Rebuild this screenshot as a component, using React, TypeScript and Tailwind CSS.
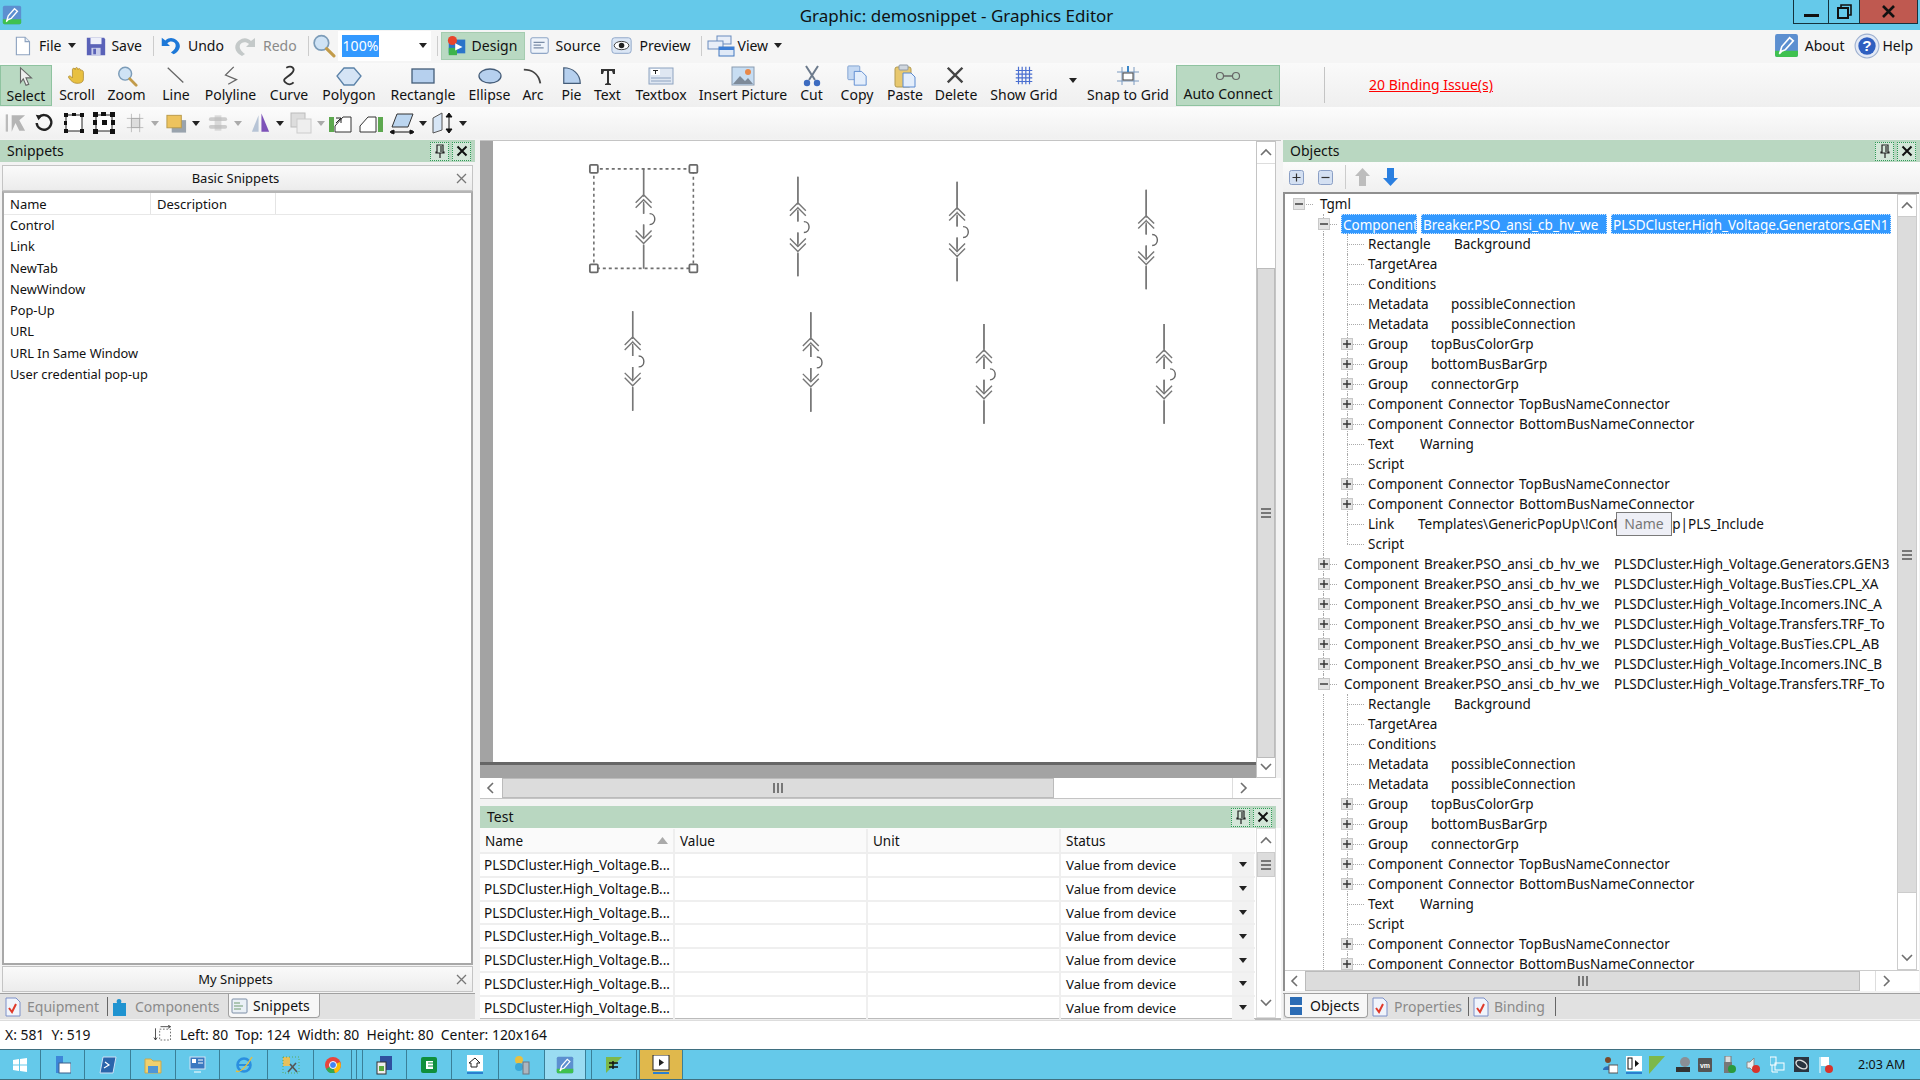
import type { ReactNode } from 'react'

const S = ({ w = 24, h = 24, vb = '0 0 24 24', children }: { w?: number; h?: number; vb?: string; children: ReactNode }) => (
  <svg width={w} height={h} viewBox={vb} className="shrink-0" fill="none">
    {children}
  </svg>
)

const Caret = ({ light }: { light?: boolean }) => (
  <svg width="8" height="5" viewBox="0 0 8 5" className="shrink-0">
    <path d="M0 0h8L4 5z" fill={light ? '#aaa' : '#222'} />
  </svg>
)

const Logo = ({ s = 20 }: { s?: number }) => (
  <S w={s} h={s}>
    <rect x="1" y="1" width="22" height="22" rx="2" fill="#5c8fd0" />
    <path d="M1 17h22v4a2 2 0 0 1-2 2H3a2 2 0 0 1-2-2z" fill="#3fc14f" />
    <path d="M6 18l1.5-5L15 4.5l3.5 3L11 16z" stroke="#fff" strokeWidth="1.6" />
    <path d="M5 20l2-2" stroke="#fff" strokeWidth="1.6" />
  </S>
)

const DocIco = () => (
  <S w={21} h={22}>
    <path d="M5 2h10l5 5v15H5z" fill="#fff" stroke="#8ea3c0" strokeWidth="1.3" />
    <path d="M15 2v5h5" stroke="#8ea3c0" strokeWidth="1.3" fill="#e5ecf5" />
  </S>
)
const SaveIco = () => (
  <S w={24} h={22}>
    <path d="M2 3h19l1 2v17H2z" fill="#5a62b8" />
    <rect x="6" y="3" width="12" height="7" fill="#eef0fa" />
    <rect x="7" y="14" width="10" height="8" fill="#c8cdea" />
    <rect x="9" y="15" width="3" height="6" fill="#5a62b8" />
  </S>
)
const UndoIco = ({ color = '#1d78d8' }: { color?: string }) => (
  <S w={24} h={22}>
    <path d="M3 3v9h9l-3-3c3-3 8-2 9 1s-1 6-5 9l3 2c6-3 8-8 6-12S13 0 7 6z" fill={color} />
  </S>
)
const RedoIco = () => (
  <svg width="24" height="22" viewBox="0 0 24 22" className="shrink-0 -scale-x-100">
    <path d="M3 3v9h9l-3-3c3-3 8-2 9 1s-1 6-5 9l3 2c6-3 8-8 6-12S13 0 7 6z" fill="#c4c9c9" />
  </svg>
)
const Glass = ({ s = 24 }: { s?: number }) => (
  <S w={s} h={s}>
    <circle cx="10" cy="9.5" r="7" fill="#cfe3f5" stroke="#7c9cb8" strokeWidth="1.6" />
    <path d="M15 15l7 7" stroke="#c29b4a" strokeWidth="3" strokeLinecap="round" />
  </S>
)
const DesignIco = () => (
  <S w={22} h={22}>
    <rect x="3" y="5" width="18" height="15" fill="#2b74c9" />
    <circle cx="7" cy="6" r="5" fill="#e8452c" />
    <rect x="3" y="14" width="9" height="8" fill="#3eb34a" />
    <path d="M10 9l8 4-8 4z" fill="#fff" />
  </S>
)
const SourceIco = () => (
  <S w={22} h={22}>
    <rect x="2" y="3" width="19" height="17" rx="2" fill="#eef3fa" stroke="#90a6c6" strokeWidth="1.2" />
    <path d="M5 8h12M5 11h8M5 14h11" stroke="#7a8ca6" strokeWidth="1.2" />
  </S>
)
const EyeIco = () => (
  <S w={22} h={22}>
    <rect x="1" y="3" width="21" height="17" rx="3" fill="#dbe6f5" stroke="#8ba3c6" />
    <ellipse cx="11.5" cy="11.5" rx="8" ry="4.5" fill="#fff" stroke="#333" />
    <circle cx="11.5" cy="11.5" r="3" fill="#222" />
  </S>
)
const ViewIco = () => (
  <S w={29} h={22} vb="0 0 29 22">
    <rect x="10" y="1" width="14" height="8" fill="#e8eef8" stroke="#6a8bbd" />
    <rect x="1" y="6" width="15" height="8" fill="#e8eef8" stroke="#6a8bbd" />
    <rect x="12" y="12" width="15" height="9" fill="#dfe9f7" stroke="#4378c0" />
    <rect x="12" y="12" width="15" height="3" fill="#3d7fd6" />
  </S>
)
const HelpIco = () => (
  <S w={26} h={26}>
    <circle cx="12" cy="12" r="11" fill="#e3e9f5" stroke="#9db0d0" />
    <circle cx="12" cy="12" r="8" fill="#2f5fc0" />
    <text x="12" y="17" textAnchor="middle" fontSize="14" fontWeight="700" fill="#fff" fontFamily="Liberation Sans, sans-serif">?</text>
  </S>
)

const tools: { label: string; w: string; active?: boolean; icon: ReactNode }[] = [
  { label: 'Select', w: 'w-[52px]', active: true, icon: <S w={22} h={22}><path d="M6 2l12 11h-6l3 7-3 1-3-7-3 4z" fill="#eee" stroke="#666" strokeWidth="1.2" /></S> },
  { label: 'Scroll', w: 'w-[50px]', icon: <S w={24} h={22}><path d="M3 14c-1-2 1-3 3-1l1 1V5c0-2 3-2 3 0 0-3 3-3 3 0 1-2 3-1 3 1 1-1 3 0 3 2v7c0 4-3 5-7 5s-7-3-9-6z" fill="#e8c040" stroke="#a8842c" strokeWidth=".8" /></S> },
  { label: 'Zoom', w: 'w-[49px]', icon: <Glass s={22} /> },
  { label: 'Line', w: 'w-[50px]', icon: <S w={22} h={22}><path d="M3 3l17 16" stroke="#666" strokeWidth="1.4" /></S> },
  { label: 'Polyline', w: 'w-[59px]', icon: <S w={22} h={22}><path d="M15 2L6 11l12 5-9 5" stroke="#666" strokeWidth="1.4" /></S> },
  { label: 'Curve', w: 'w-[58px]', icon: <S w={22} h={22}><path d="M9 3c6-3 11 1 6 6s-11 6-7 10 8 1 9 0" stroke="#333" strokeWidth="2" /></S> },
  { label: 'Polygon', w: 'w-[62px]', icon: <S w={26} h={22} vb="0 0 26 22"><path d="M8 3h10l7 8-7 9H8l-7-9z" fill="#d5e4f5" stroke="#5b82a8" strokeWidth="1.3" /></S> },
  { label: 'Rectangle', w: 'w-[86px]', icon: <S w={24} h={20} vb="0 0 24 20"><rect x="1" y="3" width="22" height="14" fill="#b6d0ee" stroke="#445c78" strokeWidth="1.3" /></S> },
  { label: 'Ellipse', w: 'w-[47px]', icon: <S w={24} h={20} vb="0 0 24 20"><ellipse cx="12" cy="10" rx="11" ry="7" fill="#b6d0ee" stroke="#445c78" strokeWidth="1.3" /></S> },
  { label: 'Arc', w: 'w-[40px]', icon: <S w={22} h={22}><path d="M2 5c8 0 16 4 18 15" stroke="#444" strokeWidth="2" /></S> },
  { label: 'Pie', w: 'w-[37px]', icon: <S w={22} h={22}><path d="M3 3v17h18C21 10 13 3 3 3z" fill="#b6d0ee" stroke="#445c78" strokeWidth="1.3" /></S> },
  { label: 'Text', w: 'w-[35px]', icon: <S w={20} h={22} vb="0 0 20 22"><path d="M3 4h14v5h-2l-1-3h-3v12l2 1v1H7v-1l2-1V6H6L5 9H3z" fill="#333" /></S> },
  { label: 'Textbox', w: 'w-[72px]', icon: <S w={26} h={20} vb="0 0 26 20"><rect x="1" y="2" width="24" height="16" fill="#dfe7f2" stroke="#8ea3c0" /><rect x="3" y="3" width="9" height="6" fill="#fff" /><path d="M5 4h5v1H8v3H7V5H5z" fill="#222" /><path d="M3 12h20M3 15h20" stroke="#8ea3c0" /></S> },
  { label: 'Insert Picture', w: 'w-[92px]', icon: <S w={24} h={20} vb="0 0 24 20"><rect x="1" y="1" width="22" height="18" fill="#c7ddf2" stroke="#8a9bb0" /><path d="M2 18l7-8 5 5 3-3 5 6z" fill="#7d8a99" /><circle cx="17" cy="6" r="3" fill="#e8894a" /></S> },
  { label: 'Cut', w: 'w-[45px]', icon: <S w={20} h={22} vb="0 0 20 22"><path d="M4 1l9 14M16 1L7 15" stroke="#6c7a8c" strokeWidth="2" /><circle cx="5" cy="18" r="3.2" fill="#3d6cc0" /><circle cx="15" cy="18" r="3.2" fill="#3d6cc0" /></S> },
  { label: 'Copy', w: 'w-[46px]', icon: <S w={24} h={22}><rect x="2" y="1" width="13" height="15" rx="1" fill="#c5d9f3" stroke="#7d9fd0" /><path d="M9 7h8l5 5v10H9z" fill="#e4eefb" stroke="#5b8ad0" /></S> },
  { label: 'Paste', w: 'w-[50px]', icon: <S w={24} h={24}><rect x="2" y="3" width="16" height="20" rx="2" fill="#e8c86e" stroke="#b29a50" /><rect x="6" y="1" width="9" height="5" rx="1" fill="#cfd6de" stroke="#9099a5" /><path d="M10 9h8l4 4v10H10z" fill="#e4eefb" stroke="#5b8ad0" /></S> },
  { label: 'Delete', w: 'w-[52px]', icon: <S w={22} h={22}><path d="M3 3l16 16M19 3L3 19" stroke="#444" strokeWidth="2.6" /></S> },
  { label: 'Show Grid', w: 'w-[84px]', icon: <S w={24} h={22}><path d="M3 6h18M3 10h18M3 14h18M3 18h18M6 2v19M10 2v19M14 2v19M18 2v19" stroke="#4a6fd0" strokeWidth="1.3" /></S> },
]

const tools2: { label: string; w: string; active?: boolean; icon: ReactNode }[] = [
  { label: 'Snap to Grid', w: 'w-[96px]', icon: <S w={26} h={22} vb="0 0 26 22"><path d="M2 7h22M2 16h22M7 2v18M19 2v18" stroke="#7a9ac0" strokeWidth="1" /><rect x="8" y="8" width="10" height="7" fill="#fff" stroke="#444" /><path d="M13 1v6" stroke="#3a86c8" strokeWidth="2" /></S> },
  { label: 'Auto Connect', w: 'w-[104px]', active: true, icon: <S w={26} h={14} vb="0 0 26 14"><circle cx="5" cy="7" r="3.5" stroke="#666" strokeWidth="1.2" /><circle cx="21" cy="7" r="3.5" stroke="#666" strokeWidth="1.2" /><path d="M8 7h10" stroke="#666" strokeWidth="1.5" /></S> },
]

const ToolBtn = ({ label, w, active, icon }: { label: string; w: string; active?: boolean; icon: ReactNode }) => (
  <div className={`${w} h-[41px] flex flex-col items-center justify-between shrink-0 pt-[1px] pb-[3px] ${active ? 'bg-[#b9d9c2] border border-[#8fc3a0]' : ''}`}>
    <div className="h-[21px] flex items-center justify-center">{icon}</div>
    <span className="leading-[16px] whitespace-nowrap">{label}</span>
  </div>
)

const sec: { ml: string; caret?: boolean; light?: boolean; icon: ReactNode }[] = [
  { ml: 'ml-[4px]', icon: <S w={23} h={24}><path d="M8 4h14l-6 5 6 11h-6l-4-8-4 9z" fill="#b5b5b5" /><path d="M3 3v18" stroke="#bbb" strokeWidth="2.4" /></S> },
  { ml: 'ml-[6px]', icon: <S w={22} h={24}><path d="M6 6a8 8 0 1 1-2 6" stroke="#222" strokeWidth="2.6" /><path d="M3 3l7 1-4 5z" fill="#222" /></S> },
  { ml: 'ml-[7px]', icon: <S w={24} h={24}><rect x="4" y="4" width="16" height="16" stroke="#222" strokeWidth="1" fill="#fff" /><path d="M2 2h4v4H2zM18 2h4v4h-4zM2 18h4v4H2zM18 18h4v4h-4zM10 2h4v3h-4zM2 10h3v4H2z" fill="#111" /></S> },
  { ml: 'ml-[6px]', icon: <S w={24} h={24}><rect x="4" y="4" width="16" height="16" stroke="#222" fill="#fff" /><path d="M1 1h5v5H1zM18 1h5v5h-5zM1 18h5v5H1zM18 18h5v5h-5zM10 9h5v5h-5zM9 1h5v4H9zM1 9h4v5H1zM19 9h4v5h-4z" fill="#111" /></S> },
  { ml: 'ml-[9px]', caret: true, light: true, icon: <S w={22} h={24}><path d="M2 7h18M2 17h18M7 2v20M16 2v20" stroke="#bbb" /><rect x="7" y="7" width="9" height="10" fill="#ddd" stroke="#aaa" /></S> },
  { ml: 'ml-[6px]', caret: true, icon: <S w={23} h={24}><rect x="7" y="9" width="15" height="13" fill="#99a3ad" /><rect x="2" y="4" width="15" height="13" fill="#edc35e" stroke="#b99a4a" /></S> },
  { ml: 'ml-[7px]', caret: true, light: true, icon: <S w={23} h={24}><rect x="2" y="6" width="19" height="4" rx="2" fill="#ccc" /><rect x="2" y="14" width="19" height="4" rx="2" fill="#ccc" /><rect x="8" y="4" width="7" height="16" fill="#bbb" opacity=".5" /></S> },
  { ml: 'ml-[7px]', caret: true, icon: <S w={23} h={24}><path d="M10 4v17H3z" fill="#b7c4d6" /><path d="M13 2v19h8z" fill="#7d52b8" /></S> },
  { ml: 'ml-[5px]', caret: true, light: true, icon: <S w={24} h={24}><rect x="2" y="2" width="14" height="14" fill="#ddd" stroke="#bbb" /><rect x="8" y="8" width="14" height="14" fill="#eee" stroke="#ccc" /></S> },
  { ml: 'ml-[3px]', icon: <S w={27} h={24} vb="0 0 27 24"><rect x="1" y="6" width="5" height="15" fill="#5da84f" /><path d="M7 15l8-9h8v15H7z" fill="#fff" stroke="#333" /><path d="M8 12l5-5M8 7h5v5" stroke="#222" /></S> },
  { ml: 'ml-[4px]', icon: <S w={25} h={24} vb="0 0 25 24"><rect x="19" y="6" width="5" height="15" fill="#5da84f" /><path d="M17 15l-8-9H1v15h16z" fill="#fff" stroke="#333" transform="matrix(-1 0 0 1 18 0)" /></S> },
  { ml: 'ml-[5px]', caret: true, icon: <S w={26} h={24} vb="0 0 26 24"><path d="M8 3h16l-5 13H3z" fill="#bcd6f0" stroke="#333" /><path d="M3 21h20M3 19v4M23 19v4M1 21l4-2v4zM25 21l-4-2v4z" stroke="#111" fill="#111" /></S> },
  { ml: 'ml-[3px]', caret: true, icon: <S w={25} h={24} vb="0 0 25 24"><path d="M3 7l9-5v17l-9 3z" fill="#d7e6f6" stroke="#555" /><path d="M19 3v18M16 6l3-4 3 4zM16 18l3 4 3-4z" stroke="#111" fill="#111" /></S> },
]

const PanelHeader = ({ title, className = '' }: { title: string; className?: string }) => (
  <div className={`h-[22px] bg-[#b9d7c1] flex items-center justify-between pl-[7px] pr-[4px] shrink-0 ${className}`}>
    <span className="leading-none">{title}</span>
    <div className="flex gap-[3px]">
      <div className="w-[19px] h-[19px] bg-[#d3e6d8] border border-dotted border-[#2d9a55] flex items-center justify-center">
        <S w={12} h={14} vb="0 0 12 14"><path d="M3 1h6v7h1v1H2V8h1zM6 9v5M7 2v6" stroke="#222" strokeWidth="1.2" /></S>
      </div>
      <div className="w-[19px] h-[19px] bg-[#d3e6d8] border border-dotted border-[#2d9a55] flex items-center justify-center">
        <S w={12} h={12} vb="0 0 12 12"><path d="M1.5 1.5l9 9M10.5 1.5l-9 9" stroke="#111" strokeWidth="2" /></S>
      </div>
    </div>
  </div>
)

const Chev = ({ d }: { d: 'u' | 'd' | 'l' | 'r' }) => {
  const p = { u: 'M2 9l5-5 5 5', d: 'M2 5l5 5 5-5', l: 'M9 2L4 7l5 5', r: 'M5 2l5 5-5 5' }[d]
  return (
    <svg width="14" height="14" viewBox="0 0 14 14" fill="none">
      <path d={p} stroke="#6f6f6f" strokeWidth="1.6" />
    </svg>
  )
}
const Grip = ({ vertical }: { vertical?: boolean }) => (
  <div className={`flex ${vertical ? 'flex-col' : ''} gap-[2px]`}>
    <i className={`block bg-[#777] ${vertical ? 'w-[10px] h-[2px]' : 'w-[2px] h-[10px]'}`} />
    <i className={`block bg-[#777] ${vertical ? 'w-[10px] h-[2px]' : 'w-[2px] h-[10px]'}`} />
    <i className={`block bg-[#777] ${vertical ? 'w-[10px] h-[2px]' : 'w-[2px] h-[10px]'}`} />
  </div>
)
const SBtn = ({ d, className = '' }: { d: 'u' | 'd' | 'l' | 'r'; className?: string }) => (
  <div className={`flex items-center justify-center bg-white shrink-0 ${className}`}>
    <Chev d={d} />
  </div>
)

const Symbol = ({ x, y }: { x: number; y: number }) => (
  <g transform={`translate(${x} ${y})`} stroke="#777" strokeWidth="1.4" fill="none">
    <path d="M0 0v45M0 56v44" />
    <path d="M-8 35l8-8 8 8M-8 40l8-8 8 8" stroke="#fff" strokeWidth="3.4" />
    <path d="M-8 34l8-8 8 8M-8 39l8-8 8 8" />
    <path d="M-8 62l8 8 8-8M-8 67l8 8 8-8" stroke="#fff" strokeWidth="3.4" />
    <path d="M-8 62l8 8 8-8M-8 67l8 8 8-8" />
    <path d="M0 0v28M0 76v24M0 33v12M0 56v14" />
    <path d="M6 45c7 0 7 11 0 11" stroke="#666" />
  </g>
)

const Canvas = () => (
  <svg className="w-full h-full block" viewBox="0 0 762 624">
    <g>
      <Symbol x={149} y={28} />
      <Symbol x={304} y={36} />
      <Symbol x={464} y={41} />
      <Symbol x={654} y={49} />
      <Symbol x={138} y={171} />
      <Symbol x={317} y={172} />
      <Symbol x={491} y={184} />
      <Symbol x={672} y={184} />
    </g>
    <rect x="99" y="28" width="100" height="100" fill="none" stroke="#6f6f6f" strokeWidth="1.6" strokeDasharray="3 3" />
    <g fill="#fff" stroke="#6a6a6a" strokeWidth="1.8">
      <rect x="95" y="24" width="8" height="8" rx="1" />
      <rect x="195" y="24" width="8" height="8" rx="1" />
      <rect x="95" y="124" width="8" height="8" rx="1" />
      <rect x="195" y="124" width="8" height="8" rx="1" />
    </g>
  </svg>
)

const snippets = ['Control', 'Link', 'NewTab', 'NewWindow', 'Pop-Up', 'URL', 'URL In Same Window', 'User credential pop-up']

const Accordion = ({ title, className = '' }: { title: string; className?: string }) => (
  <div className={`h-[26px] flex items-center bg-gradient-to-b from-[#fafafa] to-[#ececec] border border-[#c4c4c4] relative shrink-0 ${className}`}>
    <span className="flex-1 text-center text-[13px] pr-[4px]">{title}</span>
    <span className="absolute right-[5px] top-[6px] w-[12px] h-[12px] flex items-center justify-center">
      <svg width="11" height="11" viewBox="0 0 11 11"><path d="M1 1l9 9M10 1l-9 9" stroke="#777" strokeWidth="1.3" /></svg>
    </span>
  </div>
)

const CheckDoc = () => (
  <S w={16} h={20} vb="0 0 16 20">
    <path d="M1 1h10l4 4v14H1z" fill="#f0f4fb" stroke="#7c90c8" />
    <path d="M4 11l3 4 4-8" stroke="#e03a2a" strokeWidth="2" />
  </S>
)
const PuzzleIco = () => (
  <S w={16} h={20} vb="0 0 16 20">
    <path d="M1 6h4c-1-2 0-4 2-4s3 2 2 4h5v13H1z" fill="#1f93d0" />
  </S>
)
const SnipIco = () => (
  <S w={18} h={18} vb="0 0 18 18">
    <rect x="1" y="2" width="15" height="14" rx="1" fill="#eaf0f6" stroke="#7d8ea6" />
    <path d="M3 6h6M3 9h9M3 12h7" stroke="#6f9a6f" />
  </S>
)
const ObjIco = () => (
  <S w={12} h={20} vb="0 0 12 20">
    <rect x="0" y="1" width="12" height="8" fill="#2b6cb5" />
    <rect x="0" y="11" width="12" height="8" fill="#2b6cb5" />
  </S>
)

type Row = { l: 0 | 1 | 2; e?: '+' | '-'; a: string; b?: string; c?: string; aw?: string; bw?: string; sel?: boolean; last?: boolean }
const comp = (c: string, extra: Partial<Row> = {}): Row => ({ l: 1, e: '+', a: 'Component', b: 'Breaker.PSO_ansi_cb_hv_we', c, aw: 'w-[80px]', bw: 'w-[190px]', ...extra })
const conn = (c: string): Row => ({ l: 2, e: '+', a: 'Component', b: 'Connector', c, aw: 'w-[80px]', bw: 'w-[71px]' })
const subtree = (): Row[] => [
  { l: 2, a: 'Rectangle', b: 'Background', aw: 'w-[86px]' },
  { l: 2, a: 'TargetArea' },
  { l: 2, a: 'Conditions' },
  { l: 2, a: 'Metadata', b: 'possibleConnection', aw: 'w-[83px]' },
  { l: 2, a: 'Metadata', b: 'possibleConnection', aw: 'w-[83px]' },
  { l: 2, e: '+', a: 'Group', b: 'topBusColorGrp', aw: 'w-[63px]' },
  { l: 2, e: '+', a: 'Group', b: 'bottomBusBarGrp', aw: 'w-[63px]' },
  { l: 2, e: '+', a: 'Group', b: 'connectorGrp', aw: 'w-[63px]' },
  conn('TopBusNameConnector'),
  conn('BottomBusNameConnector'),
  { l: 2, a: 'Text', b: 'Warning', aw: 'w-[52px]' },
  { l: 2, a: 'Script' },
  conn('TopBusNameConnector'),
  conn('BottomBusNameConnector'),
]
const rows: Row[] = [
  { l: 0, e: '-', a: 'Tgml' },
  comp('PLSDCluster.High_Voltage.Generators.GEN1', { e: '-', sel: true }),
  ...subtree(),
  { l: 2, a: 'Link', b: 'Templates\\GenericPopUp\\!ContextPopUp|PLS_Include', aw: 'w-[50px]' },
  { l: 2, a: 'Script', last: true },
  comp('PLSDCluster.High_Voltage.Generators.GEN3'),
  comp('PLSDCluster.High_Voltage.BusTies.CPL_XA'),
  comp('PLSDCluster.High_Voltage.Incomers.INC_A'),
  comp('PLSDCluster.High_Voltage.Transfers.TRF_To'),
  comp('PLSDCluster.High_Voltage.BusTies.CPL_AB'),
  comp('PLSDCluster.High_Voltage.Incomers.INC_B'),
  comp('PLSDCluster.High_Voltage.Transfers.TRF_To', { e: '-', last: true }),
  ...subtree(),
]

const Expander = ({ kind, className }: { kind: '+' | '-'; className: string }) => (
  <span className={`absolute top-[4px] w-[12px] h-[12px] bg-[#e4e4e4] border border-[#c8c8c8] flex items-center justify-center ${className}`}>
    <svg width="8" height="8" viewBox="0 0 8 8">
      <path d={kind === '+' ? 'M0 4h8M4 0v8' : 'M0 4h8'} stroke="#333" strokeWidth="1.4" />
    </svg>
  </span>
)

const TreeRow = ({ r }: { r: Row }) => {
  const gut = r.l === 0 ? 'w-[35px]' : r.l === 1 ? 'w-[59px]' : 'w-[83px]'
  return (
    <div className="flex h-[20px] items-center whitespace-nowrap">
      <div className={`relative h-full shrink-0 ${gut}`}>
        {r.l >= 1 && <i className={`absolute left-[38px] top-0 border-l border-dotted border-[#aaa] ${r.l === 1 && r.last ? 'h-[10px]' : 'h-full'}`} />}
        {r.l === 2 && <i className={`absolute left-[62px] top-0 border-l border-dotted border-[#aaa] ${r.last ? 'h-[10px]' : 'h-full'}`} />}
        <i className={`absolute top-[10px] border-t border-dotted border-[#aaa] ${r.l === 0 ? 'left-[14px] w-[14px]' : r.l === 1 ? 'left-[38px] w-[14px]' : 'left-[62px] w-[17px]'}`} />
        {r.e && <Expander kind={r.e} className={r.l === 0 ? 'left-[8px]' : r.l === 1 ? 'left-[33px]' : 'left-[56px]'} />}
      </div>
      {r.sel ? (
        <div className="flex gap-[4px] h-[20px] text-white -ml-[3px]">
          <span className="bg-[#3399ff] border border-dotted border-[#cfe6ff] px-[1px] w-[76px] overflow-hidden">{r.a}</span>
          <span className="bg-[#3399ff] border border-dotted border-[#cfe6ff] px-[1px] w-[186px] overflow-hidden">{r.b}</span>
          <span className="bg-[#3399ff] border border-dotted border-[#cfe6ff] px-[1px] w-[280px] overflow-hidden">{r.c}</span>
        </div>
      ) : (
        <div className="flex">
          <span className={r.b ? `${r.aw} shrink-0` : ''}>{r.a}</span>
          {r.b && <span className={r.c ? `${r.bw} shrink-0` : ''}>{r.b}</span>}
          {r.c && <span>{r.c}</span>}
        </div>
      )}
    </div>
  )
}

const taskCells: { w: string; hi?: 'a' | 'y'; gap?: boolean; icon?: ReactNode }[] = [
  { w: 'w-[41px]', icon: <svg width="14" height="14" viewBox="0 0 14 14"><path d="M0 2l6-1v5.5H0zM7 1l7-1v6.5H7zM0 7.5h6V13l-6-1zM7 7.5h7V14l-7-1z" fill="#fff" /></svg> },
  { w: 'w-[44px]', icon: <S w={16} h={18} vb="0 0 16 18"><rect x="1" y="0" width="7" height="17" fill="#3d86d8" /><rect x="4" y="7" width="12" height="10" fill="#fff" stroke="#3a5f8a" /></S> },
  { w: 'w-[46px]', icon: <S w={18} h={18} vb="0 0 18 18"><path d="M4 1h13l-3 16H1z" fill="#2a64ab" stroke="#cfe0f5" /><path d="M6 6l4 3-5 3" stroke="#fff" strokeWidth="1.2" /></S> },
  { w: 'w-[45px]', icon: <S w={18} h={18} vb="0 0 18 18"><path d="M1 3h6l2 2h8v12H1z" fill="#f0d06e" stroke="#c9a94e" /><rect x="4" y="10" width="10" height="7" fill="#4f95d6" /></S> },
  { w: 'w-[44px]', icon: <S w={17} h={18} vb="0 0 17 18"><rect x="1" y="1" width="15" height="12" fill="#3a78c0" stroke="#d5e4f4" /><rect x="3" y="3" width="4" height="4" fill="#fff" /><path d="M9 4h5M9 7h5M5 16h7" stroke="#fff" /></S> },
  { w: 'w-[48px]', icon: <S w={18} h={20} vb="0 0 18 20"><circle cx="9" cy="10" r="6.5" fill="none" stroke="#2a8fe0" strokeWidth="2.6" /><path d="M3 10h12" stroke="#2a8fe0" strokeWidth="2" /><path d="M1 16c4 2 10-4 16-14" stroke="#e8bd3c" strokeWidth="1.4" fill="none" /></S> },
  { w: 'w-[46px]', icon: <S w={18} h={18} vb="0 0 18 18"><rect x="1" y="1" width="7" height="9" fill="#e8c05a" /><path d="M6 16l8-9M8 8l7 8" stroke="#555" strokeWidth="1.6" /><rect x="1" y="1" width="16" height="16" fill="none" stroke="#5aa85a" strokeDasharray="1 2" /></S> },
  { w: 'w-[38px]', icon: <S w={16} h={16} vb="0 0 16 16"><circle cx="8" cy="8" r="8" fill="#e8453c" /><path d="M8 8L1 12a8 8 0 0 0 9 4z" fill="#34a853" /><path d="M8 8l7-3a8 8 0 0 1-5 11z" fill="#fbbc05" /><circle cx="8" cy="8" r="3.5" fill="#4285f4" stroke="#fff" /></S> },
  { w: 'w-[5px]' },
  { w: 'w-[6px]' },
  { w: 'w-[44px]', icon: <S w={18} h={20} vb="0 0 18 20"><rect x="4" y="1" width="12" height="14" fill="#2f4f9f" /><rect x="1" y="7" width="9" height="12" fill="#eee" stroke="#333" /><path d="M3 11h5v5H3z" fill="#5aaa3c" /></S> },
  { w: 'w-[45px]', icon: <S w={18} h={18} vb="0 0 18 18"><rect x="1" y="1" width="16" height="16" rx="2" fill="#0f8f3c" /><path d="M6 5h7v8H6z" fill="#fff" /><path d="M8 7h6M8 10h6" stroke="#0f8f3c" /></S> },
  { w: 'w-[47px]', icon: <S w={18} h={20} vb="0 0 18 20"><rect x="1" y="0" width="16" height="16" fill="#fff" /><path d="M9 3l5 5h-3v4H5V8H3z" fill="#fff" stroke="#222" /><rect x="1" y="17" width="16" height="2" fill="#2a7fd0" /></S> },
  { w: 'w-[46px]', icon: <S w={18} h={20} vb="0 0 18 20"><circle cx="6" cy="5" r="4" fill="#e8c040" /><circle cx="6" cy="12" r="4" fill="#3aa8d8" /><rect x="10" y="7" width="6" height="12" fill="#aeb6bf" stroke="#6e7680" /></S> },
  { w: 'w-[41px]', hi: 'a', icon: <Logo s={18} /> },
  { w: 'w-[6px]' },
  { w: 'w-[45px]', icon: <S w={18} h={18} vb="0 0 18 18"><path d="M1 1h16L1 17z" fill="#7db84a" /><path d="M4 7h9M4 11h9M8 5v8" stroke="#111" strokeWidth="1.4" /></S> },
  { w: 'w-[3px]' },
  { w: 'w-[43px]', hi: 'y', icon: <S w={18} h={20} vb="0 0 18 20"><rect x="1" y="0" width="16" height="15" fill="#fff" stroke="#222" /><path d="M7 4l5 3.5L7 11z" fill="#222" /><rect x="1" y="17" width="16" height="2" fill="#2a7fd0" /></S> },
]

const tray: { ml: string; icon: ReactNode }[] = [
  { ml: 'ml-[1602px]', icon: <S w={16} h={18} vb="0 0 16 18"><circle cx="6" cy="4" r="3" fill="#7a4a2a" /><path d="M1 14c0-5 10-5 10 0z" fill="#2d6fb8" /><rect x="7" y="9" width="9" height="8" fill="#fff" stroke="#555" /></S> },
  { ml: 'ml-[8px]', icon: <S w={16} h={18} vb="0 0 16 18"><rect x="0" y="0" width="16" height="15" fill="#fff" /><rect x="2" y="2" width="4" height="11" fill="none" stroke="#111" /><path d="M9 4l4 3.5L9 11z" fill="#111" /><rect x="0" y="16" width="16" height="2" fill="#2a7fd0" /></S> },
  { ml: 'ml-[7px]', icon: <S w={16} h={18} vb="0 0 16 18"><path d="M0 0h16L0 18z" fill="#7db84a" /></S> },
  { ml: 'ml-[11px]', icon: <S w={14} h={16} vb="0 0 14 16"><circle cx="9" cy="5" r="5" fill="#8a8f96" /><rect x="0" y="10" width="14" height="5" fill="#333" /></S> },
  { ml: 'ml-[8px]', icon: <S w={14} h={14} vb="0 0 14 14"><rect x="0" y="0" width="14" height="14" rx="1" fill="#555" /><text x="7" y="10" textAnchor="middle" fontSize="7" fontWeight="700" fill="#fff" fontFamily="Liberation Sans, sans-serif">vm</text></S> },
  { ml: 'ml-[10px]', icon: <S w={14} h={18} vb="0 0 14 18"><rect x="3" y="0" width="6" height="8" fill="#ddd" stroke="#777" /><rect x="2" y="6" width="8" height="11" fill="#777" /><circle cx="10" cy="13" r="4" fill="#2a9a3c" /></S> },
  { ml: 'ml-[10px]', icon: <S w={14} h={18} vb="0 0 14 18"><path d="M1 6h3l4-4v14l-4-4H1z" fill="#eee" stroke="#888" /><circle cx="10" cy="13" r="4" fill="#d8342c" /></S> },
  { ml: 'ml-[10px]', icon: <S w={15} h={18} vb="0 0 15 18"><rect x="0" y="1" width="6" height="8" fill="none" stroke="#fff" /><rect x="5" y="7" width="9" height="7" fill="none" stroke="#fff" /><path d="M2 9v7h6" stroke="#fff" /></S> },
  { ml: 'ml-[9px]', icon: <S w={15} h={15} vb="0 0 15 15"><rect x="0" y="0" width="15" height="15" fill="#2a3440" /><ellipse cx="7.5" cy="7.5" rx="6" ry="3.5" fill="none" stroke="#ddd" strokeWidth="1.5" transform="rotate(30 7.5 7.5)" /></S> },
  { ml: 'ml-[10px]', icon: <S w={15} h={18} vb="0 0 15 18"><path d="M1 1v16" stroke="#fff" /><path d="M2 1h8v9H2z" fill="#fff" /><circle cx="10" cy="13" r="4" fill="#d8342c" /></S> },
]

export default function App() {
  return (
    <div className="w-[1920px] h-[1080px] overflow-hidden flex flex-col bg-[#f3f3f3] text-[#111] text-[14px] leading-[20px] font-['Noto_Sans','Open_Sans','Liberation_Sans',sans-serif]">
      {/* title */}
      <div className="h-[30px] bg-[#65c9ea] flex shrink-0 relative">
        <div className="w-[26px] pl-[2px] pt-[5px]"><Logo s={20} /></div>
        <div className="flex-1 text-center text-[17px] leading-[31px] pl-[94px]">Graphic: demosnippet - Graphics Editor</div>
        <div className="flex h-[24px] border border-t-0 border-[#14323d] mr-[2px]">
          <div className="w-[35px] border-r border-[#14323d] flex items-end justify-center pb-[6px]"><i className="block w-[15px] h-[3px] bg-[#111]" /></div>
          <div className="w-[31px] border-r border-[#14323d] flex items-center justify-center">
            <S w={15} h={15} vb="0 0 15 15"><rect x="1" y="4" width="10" height="10" stroke="#111" strokeWidth="2" /><path d="M4 3V1h10v10h-2" stroke="#111" strokeWidth="1.6" /></S>
          </div>
          <div className="w-[57px] bg-[#bf5950] flex items-center justify-center">
            <svg width="13" height="13" viewBox="0 0 13 13"><path d="M1 1l11 11M12 1L1 12" stroke="#111" strokeWidth="2.6" /></svg>
          </div>
        </div>
      </div>

      {/* menu */}
      <div className="h-[33px] bg-[#f5f5f5] flex items-center pl-[12px] pb-[2px] shrink-0">
        <DocIco />
        <span className="ml-[6px]">File</span>
        <span className="ml-[7px]"><Caret /></span>
        <span className="ml-[8px]"><SaveIco /></span>
        <span className="ml-[3px]">Save</span>
        <i className="ml-[11px] mr-[4px] w-px h-[20px] bg-[#ccc]" />
        <UndoIco />
        <span className="ml-[6px]">Undo</span>
        <span className="ml-[10px]"><RedoIco /></span>
        <span className="ml-[5px] text-[#8a8a8a]">Redo</span>
        <i className="ml-[11px] w-px h-[20px] bg-[#ccc]" />
        <span className="ml-[2px]"><Glass s={25} /></span>
        <div className="ml-[2px] w-[93px] h-[30px] bg-white flex items-center pl-[4px] pr-[4px] justify-between">
          <span className="bg-[#3399ff] text-white px-[1px] leading-[22px] w-[37px]">100%</span>
          <Caret />
        </div>
        <i className="ml-[6px] w-px h-[20px] bg-[#ccc]" />
        <div className="ml-[3px] w-[84px] h-[28px] bg-[#b9d9c2] border border-[#a5ccb0] flex items-center pl-[4px] gap-[4px]">
          <DesignIco />
          <span>Design</span>
        </div>
        <span className="ml-[4px]"><SourceIco /></span>
        <span className="ml-[5px]">Source</span>
        <span className="ml-[10px]"><EyeIco /></span>
        <span className="ml-[7px]">Preview</span>
        <i className="ml-[11px] w-px h-[20px] bg-[#ccc]" />
        <span className="ml-[5px]"><ViewIco /></span>
        <span className="ml-[1px]">View</span>
        <span className="ml-[6px]"><Caret /></span>
        <div className="flex-1" />
        <Logo s={25} />
        <span className="ml-[6px]">About</span>
        <span className="ml-[9px]"><HelpIco /></span>
        <span className="ml-[3px] mr-[7px]">Help</span>
      </div>

      {/* tools */}
      <div className="h-[44px] bg-gradient-to-b from-[#fafafa] to-[#efefef] flex items-center shrink-0">
        {tools.map((t) => <ToolBtn key={t.label} {...t} />)}
        <div className="w-[14px] h-[41px] flex items-center justify-center pb-[10px]"><Caret /></div>
        {tools2.map((t) => <ToolBtn key={t.label} {...t} />)}
        <i className="ml-[44px] w-px h-[36px] bg-[#c4c4c4]" />
        <a className="ml-[44px] text-[#f00] underline">20 Binding Issue(s)</a>
      </div>

      {/* second toolbar */}
      <div className="h-[32px] bg-gradient-to-b from-[#fcfcfc] to-[#f0f0f0] flex items-center shrink-0">
        {sec.map((s, i) => (
          <div key={i} className={`flex items-center gap-[4px] ${s.ml}`}>
            {s.icon}
            {s.caret && <Caret light={s.light} />}
          </div>
        ))}
      </div>

      {/* main */}
      <div className="h-[881px] flex shrink-0 pt-[1px]">
        {/* left */}
        <div className="w-[475px] flex flex-col shrink-0">
          <PanelHeader title="Snippets" />
          <div className="flex-1 flex flex-col px-[2px] pt-[3px] min-h-0">
            <Accordion title="Basic Snippets" />
            <div className="flex-1 border-2 border-[#a8a8a8] border-t-[#b5b5b5] bg-white min-h-0">
              <div className="flex h-[22px] text-[13px] border-b border-[#e8e8e8] leading-[23px]">
                <div className="w-[147px] pl-[6px] border-r border-[#e4e4e4]">Name</div>
                <div className="w-[125px] pl-[6px] border-r border-[#e4e4e4]">Description</div>
              </div>
              {snippets.map((s) => (
                <div key={s} className="h-[21.3px] pl-[6px] leading-[21px] text-[12.8px]">{s}</div>
              ))}
            </div>
            <Accordion title="My Snippets" className="mt-[1px] border-[#b7d4ee]" />
          </div>
          <div className="h-[26px] mb-[1px] mt-[1px] bg-[#e1e1e1] border-t border-[#a0a0a0] flex items-stretch shrink-0 text-[#8a8a8a]">
            <div className="w-[108px] flex items-center pl-[5px] gap-[6px] border-r border-[#666] my-[3px]"><CheckDoc /><span>Equipment</span></div>
            <div className="w-[120px] flex items-center pl-[4px] gap-[7px]"><PuzzleIco /><span>Components</span></div>
            <div className="w-[92px] bg-[#f7f7f7] border border-t-0 border-[#a0a0a0] rounded-b-[4px] flex items-center pl-[2px] gap-[4px] text-[#111] mb-[1px]"><SnipIco /><span>Snippets</span></div>
          </div>
        </div>

        {/* center */}
        <div className="w-[801px] ml-[5px] flex flex-col shrink-0 mr-[2px]">
          <div className="h-[638px] flex border-t border-[#c4c4c4] shrink-0">
            <div className="flex-1 flex flex-col min-w-0">
              <div className="h-[624px] pl-[13px] bg-[#a3a3a3] shrink-0 border-b-[3px] border-[#666]">
                <div className="h-full bg-white"><Canvas /></div>
              </div>
              <div className="flex-1 bg-[#a3a3a3]" />
            </div>
            <div className="w-[20px] mr-[5px] flex flex-col border border-[#c4c4c4] bg-white shrink-0">
              <SBtn d="u" className="h-[22px] border-b border-[#ddd]" />
              <div className="h-[104px]" />
              <div className="h-[490px] bg-[#dcdcdc] border border-[#bbb] flex items-center justify-center"><Grip vertical /></div>
              <SBtn d="d" className="flex-1 pb-[3px]" />
            </div>
          </div>
          <div className="h-[21px] flex items-stretch shrink-0 pr-[29px] bg-white border-b border-[#c4c4c4]">
            <SBtn d="l" className="w-[22px]" />
            <div className="w-[552px] bg-[#dcdcdc] border border-[#bbb] flex items-center justify-center"><Grip /></div>
            <div className="flex-1" />
            <SBtn d="r" className="w-[20px] border-l border-[#ddd]" />
          </div>
          <div className="h-[7px] shrink-0" />
          <PanelHeader title="Test" className="mr-[5px]" />
          <div className="flex-1 flex border-b-2 border-[#bbb] bg-white min-h-0">
            <div className="flex-1 min-w-0">
              <div className="flex h-[26px] pt-[1px] bg-[#fafafa] border-b-2 border-[#eee] leading-[24px] text-[13.5px]">
                <div className="w-[195px] pl-[5px] border-r-2 border-[#eee] flex items-center justify-between pr-[5px]">
                  <span>Name</span>
                  <svg width="11" height="7" viewBox="0 0 11 7"><path d="M0 7h11L5.5 0z" fill="#aaa" /></svg>
                </div>
                <div className="w-[193px] pl-[5px] border-r-2 border-[#eee]">Value</div>
                <div className="w-[193px] pl-[5px] border-r-2 border-[#eee]">Unit</div>
                <div className="flex-1 pl-[5px]">Status</div>
              </div>
              {[0, 1, 2, 3, 4, 5, 6].map((i) => (
                <div key={i} className="flex h-[23.8px] border-b-2 border-[#efefef] leading-[22px] text-[13.5px]">
                  <div className="w-[195px] pl-[4px] border-r-2 border-[#efefef] overflow-hidden whitespace-nowrap">PLSDCluster.High_Voltage.B...</div>
                  <div className="w-[193px] border-r-2 border-[#efefef]" />
                  <div className="w-[193px] border-r-2 border-[#efefef]" />
                  <div className="flex-1 pl-[5px] flex justify-between items-stretch">
                    <span className="text-[13.2px]">Value from device</span>
                    <div className="w-[22px] mr-[1px] bg-[#f2f2f2] flex items-center justify-center"><Caret /></div>
                  </div>
                </div>
              ))}
            </div>
            <div className="w-[20px] ml-[1px] mr-[5px] flex flex-col border border-[#ddd] shrink-0">
              <SBtn d="u" className="h-[23px]" />
              <div className="h-[25px] bg-[#dcdcdc] border border-[#ccc] flex items-center justify-center"><Grip vertical /></div>
              <div className="flex-1" />
              <SBtn d="d" className="h-[30px]" />
            </div>
          </div>
        </div>

        {/* right */}
        <div className="flex-1 flex flex-col min-w-0">
          <PanelHeader title="Objects" className="pl-[7px]" />
          <div className="h-[30px] flex items-center shrink-0 bg-gradient-to-b from-[#fbfbfb] to-[#f0f0f0] pl-[6px]">
            <S w={15} h={15} vb="0 0 15 15"><rect x=".5" y=".5" width="14" height="14" rx="2" fill="#d4e0f2" stroke="#8a9fc5" /><path d="M3.5 7.5h8M7.5 3.5v8" stroke="#333" strokeWidth="1.2" /></S>
            <span className="ml-[14px]"><S w={15} h={15} vb="0 0 15 15"><rect x=".5" y=".5" width="14" height="14" rx="2" fill="#d4e0f2" stroke="#8a9fc5" /><path d="M3.5 7.5h8" stroke="#333" strokeWidth="1.2" /></S></span>
            <i className="ml-[12px] w-px h-[24px] bg-[#ccc]" />
            <span className="ml-[8px]"><S w={17} h={20} vb="0 0 17 20"><path d="M8.5 1L16 9h-4v10H5V9H1z" fill="#bdbdbd" /></S></span>
            <span className="ml-[11px]"><S w={17} h={20} vb="0 0 17 20"><path d="M8.5 19L16 11h-4V1H5v10H1z" fill="#2a7fe0" /></S></span>
          </div>
          <div className="flex-1 flex flex-col min-h-0 border-2 border-[#8f8f8f] border-b-0 border-r-0 bg-white relative mr-[1px] mb-[2px] text-[13.5px]">
            <div className="flex-1 flex min-h-0">
              <div className="flex-1 overflow-hidden min-w-0">
                {rows.map((r, i) => <TreeRow key={i} r={r} />)}
              </div>
              <div className="w-[20px] mr-[2px] flex flex-col bg-white shrink-0 border border-[#ccc]">
                <SBtn d="u" className="h-[21px]" />
                <div className="h-[677px] bg-[#dcdcdc] border-y border-[#ccc] flex items-center justify-center"><Grip vertical /></div>
                <div className="flex-1" />
                <SBtn d="d" className="h-[24px]" />
              </div>
            </div>
            <div className="h-[21px] flex shrink-0 pr-[24px] bg-white border-t border-[#ccc]">
              <SBtn d="l" className="w-[20px]" />
              <div className="flex-1 bg-[#dcdcdc] border border-[#bbb] flex items-center justify-center"><Grip /></div>
              <div className="w-[15px]" />
              <SBtn d="r" className="w-[20px] border-l border-[#ddd]" />
            </div>
            {/* tooltip over the tree */}
            <div className="absolute left-[331px] top-[318px] w-[56px] h-[24px] bg-[#eeeff6] border border-[#7a7a7a] text-[#777] text-center leading-[22px] text-[14px]">Name</div>
          </div>
          <div className="h-[26px] mb-[1px] bg-[#e1e1e1] border-t border-[#a0a0a0] flex items-stretch shrink-0 text-[#8a8a8a]">
            <div className="w-[84px] bg-[#f7f7f7] border border-t-0 border-[#a0a0a0] rounded-b-[4px] flex items-center pl-[5px] gap-[8px] text-[#111] mb-[1px] ml-[1px]"><ObjIco /><span>Objects</span></div>
            <div className="w-[101px] flex items-center pl-[4px] gap-[6px] border-r border-[#666] my-[3px]"><CheckDoc /><span>Properties</span></div>
            <div className="w-[87px] flex items-center pl-[4px] gap-[5px] border-r border-[#666] my-[3px]"><CheckDoc /><span>Binding</span></div>
          </div>
        </div>
      </div>

      {/* status */}
      <div className="h-[29px] bg-white border-t border-[#ddd] flex items-center pl-[5px] shrink-0 whitespace-nowrap text-[13.9px]">
        <span className="w-[147px]">X: 581&nbsp; Y: 519</span>
        <S w={22} h={20}><rect x="8" y="5" width="13" height="13" stroke="#555" strokeDasharray="2 2" /><path d="M3 4v14M1 15l2 3 2-3M9 2h12M18 0l3 2-3 2" stroke="#333" /></S>
        <span className="ml-[6px]">Left: 80&nbsp; Top: 124&nbsp; Width: 80&nbsp; Height: 80&nbsp; Center: 120x164</span>
      </div>

      {/* taskbar */}
      <div className="flex-1 bg-[#65c9ea] border-y border-[#3f6f80] flex relative">
        <div className="flex">
          {taskCells.map((c, i) => (
            <div key={i} className={`${c.w} flex items-center justify-center border-r border-[#3a7f98] ${c.hi === 'a' ? 'bg-[#9adcf2]' : c.hi === 'y' ? 'bg-[#e0b84c]' : ''}`}>
              {c.icon}
            </div>
          ))}
        </div>
        <div className="absolute inset-0 flex items-center pointer-events-none">
          {tray.map((t, i) => <div key={i} className={t.ml}>{t.icon}</div>)}
          <span className="ml-[24px] text-[12.5px]">2:03 AM</span>
        </div>
      </div>
    </div>
  )
}
